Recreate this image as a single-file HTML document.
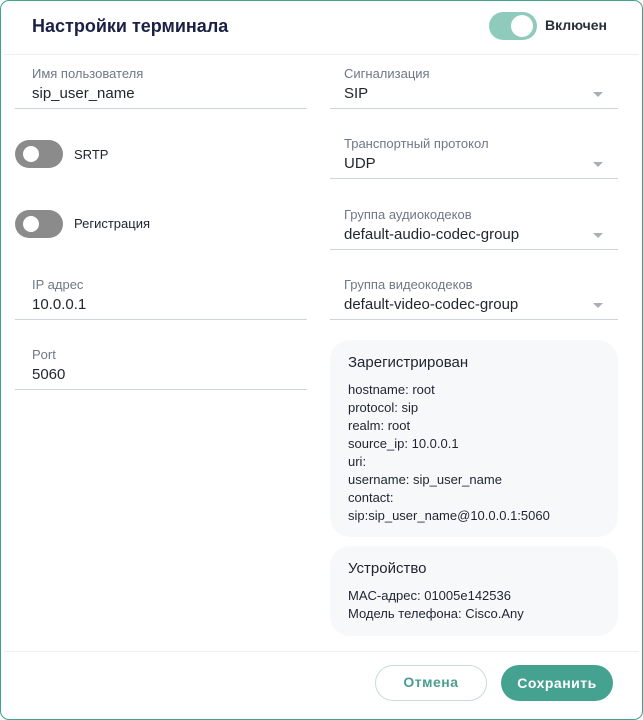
<!DOCTYPE html>
<html><head><meta charset="utf-8"><style>
*{box-sizing:border-box;margin:0;padding:0}
body{width:643px;height:720px;background:#fff;font-family:"Liberation Sans",sans-serif;position:relative;overflow:hidden;color:#1f2430}
.frame{position:absolute;left:0;top:0;width:643px;height:720px;border:1.5px solid #3fa38f;border-radius:9px}
.a{position:absolute;white-space:nowrap}
.title{left:32px;top:16px;font-size:18px;font-weight:bold;color:#1b2145}
.hr{position:absolute;height:1px;background:#eceef1}
.tog{position:absolute;width:48px;height:28px;border-radius:14px;background:#8b8b8b}
.tog i{position:absolute;top:6px;left:8px;width:16px;height:16px;border-radius:50%;background:#fff}
.on{background:#8fcbbd}
.on i{left:22px;width:22px;height:22px;top:3px}
.lbl{font-size:13px;color:#707785}
.val{font-size:15px;color:#22262e}
.line{position:absolute;height:1px;background:#cfd3da}
.arr{position:absolute;width:0;height:0;border-left:5px solid transparent;border-right:5px solid transparent;border-top:5px solid #a9aeb7}
.card{position:absolute;left:330px;width:288px;background:#f6f8fa;border-radius:20px;padding:14px 18px}
.card h3{font-size:15px;font-weight:normal;margin-bottom:10px;color:#1f2430}
.card p{font-size:13px;line-height:18px;color:#1f2430}
.btn{position:absolute;top:665px;width:112px;height:36px;border-radius:18px;font-size:14px;font-weight:bold;text-align:center;line-height:36px;letter-spacing:.5px}
</style></head><body>
<div class="frame"></div>
<div class="a title">Настройки терминала</div>
<div class="tog on" style="left:489px;top:12px"><i></i></div>
<div class="a" style="left:545px;top:17px;font-size:14px;font-weight:bold;color:#2a2f3a">Включен</div>
<div class="hr" style="left:4px;right:4px;top:54px"></div>

<div class="a lbl" style="left:32px;top:66px">Имя пользователя</div>
<div class="a val" style="left:32px;top:85px">sip_user_name</div>
<div class="line" style="left:15px;width:292px;top:108px"></div>

<div class="tog" style="left:15px;top:140px"><i></i></div>
<div class="a" style="left:74px;top:147px;font-size:13px">SRTP</div>
<div class="tog" style="left:15px;top:210px"><i></i></div>
<div class="a" style="left:74px;top:216px;font-size:13px">Регистрация</div>

<div class="a lbl" style="left:32px;top:277px">IP адрес</div>
<div class="a val" style="left:32px;top:296px">10.0.0.1</div>
<div class="line" style="left:15px;width:292px;top:319px"></div>
<div class="a lbl" style="left:32px;top:347px">Port</div>
<div class="a val" style="left:32px;top:366px">5060</div>
<div class="line" style="left:15px;width:292px;top:389px"></div>

<div class="a lbl" style="left:344px;top:66px">Сигнализация</div>
<div class="a val" style="left:344px;top:85px">SIP</div>
<div class="arr" style="left:593px;top:92px"></div>
<div class="line" style="left:330px;width:288px;top:108px"></div>
<div class="a lbl" style="left:344px;top:136px">Транспортный протокол</div>
<div class="a val" style="left:344px;top:155px">UDP</div>
<div class="arr" style="left:593px;top:162px"></div>
<div class="line" style="left:330px;width:288px;top:178px"></div>
<div class="a lbl" style="left:344px;top:207px">Группа аудиокодеков</div>
<div class="a val" style="left:344px;top:226px">default-audio-codec-group</div>
<div class="arr" style="left:593px;top:233px"></div>
<div class="line" style="left:330px;width:288px;top:249px"></div>
<div class="a lbl" style="left:344px;top:277px">Группа видеокодеков</div>
<div class="a val" style="left:344px;top:296px">default-video-codec-group</div>
<div class="arr" style="left:593px;top:303px"></div>
<div class="line" style="left:330px;width:288px;top:319px"></div>

<div class="card" style="top:340px;height:197px">
<h3>Зарегистрирован</h3>
<p>hostname: root<br>protocol: sip<br>realm: root<br>source_ip: 10.0.0.1<br>uri:<br>username: sip_user_name<br>contact:<br>sip:sip_user_name@10.0.0.1:5060</p>
</div>
<div class="card" style="top:546px;height:90px">
<h3>Устройство</h3>
<p>MAC-адрес: 01005e142536<br>Модель телефона: Cisco.Any</p>
</div>

<div class="hr" style="left:4px;right:4px;top:651px"></div>
<div class="btn" style="left:375px;border:1.5px solid #c5dedb;color:#4a9d90;line-height:33px">Отмена</div>
<div class="btn" style="left:501px;background:#46a290;color:#fff">Сохранить</div>
</body></html>
